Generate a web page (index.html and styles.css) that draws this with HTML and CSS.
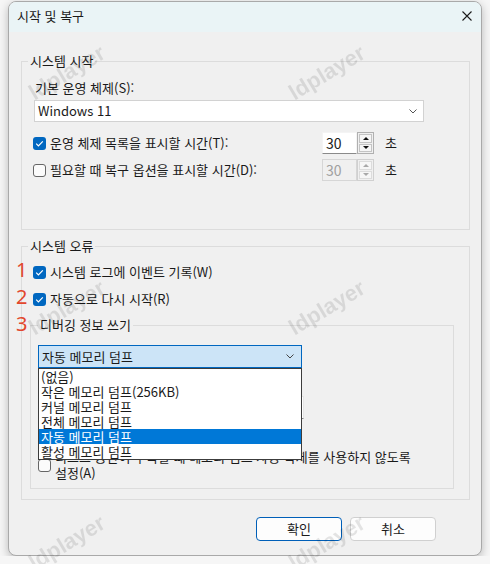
FILE: index.html
```html
<!DOCTYPE html>
<html lang="ko">
<head>
    <meta charset="UTF-8">
    <title>시작 및 복구</title>
    <link rel="stylesheet" href="styles.css">
</head>
<body>
    <div class="window">
        <div class="titlebar">
            <span class="title">시작 및 복구</span>
            <svg class="close" width="10" height="10" viewBox="0 0 10 10">
                <path d="M0.5 0.5 L9.5 9.5 M9.5 0.5 L0.5 9.5" stroke="#1b1b1b" stroke-width="1.1" fill="none"/>
            </svg>
        </div>

        <div class="content">
            <!-- 시스템 시작 -->
            <fieldset class="group startup">
                <legend>시스템 시작</legend>
                <div class="field-label">기본 운영 체제(S):</div>
                <div class="select">
                    <span>Windows 11</span>
                    <svg width="8" height="5" viewBox="0 0 8 5"><path d="M0.5 0.5 L4 4 L7.5 0.5" stroke="#555" fill="none"/></svg>
                </div>

                <div class="timeout-row">
                    <span class="check checked"><svg width="13" height="13" viewBox="0 0 13 13"><path d="M3.2 6.6 L5.4 8.8 L9.8 4.3" stroke="#fff" stroke-width="1.2" fill="none"/></svg></span>
                    <span class="timeout-label">운영 체제 목록을 표시할 시간(T):</span>
                    <div class="spinner">
                        <span class="spin-value">30</span>
                        <span class="spin-buttons"><span class="spin up"></span><span class="spin down"></span></span>
                    </div>
                    <span class="unit">초</span>
                </div>

                <div class="timeout-row second">
                    <span class="check"></span>
                    <span class="timeout-label">필요할 때 복구 옵션을 표시할 시간(D):</span>
                    <div class="spinner disabled">
                        <span class="spin-value">30</span>
                        <span class="spin-buttons"><span class="spin up"></span><span class="spin down"></span></span>
                    </div>
                    <span class="unit">초</span>
                </div>
            </fieldset>

            <!-- 시스템 오류 -->
            <fieldset class="group failure">
                <legend>시스템 오류</legend>
                <div class="check-row">
                    <span class="mark">1</span>
                    <span class="check checked"><svg width="13" height="13" viewBox="0 0 13 13"><path d="M3.2 6.6 L5.4 8.8 L9.8 4.3" stroke="#fff" stroke-width="1.2" fill="none"/></svg></span>
                    <span class="check-label">시스템 로그에 이벤트 기록(W)</span>
                </div>
                <div class="check-row">
                    <span class="mark">2</span>
                    <span class="check checked"><svg width="13" height="13" viewBox="0 0 13 13"><path d="M3.2 6.6 L5.4 8.8 L9.8 4.3" stroke="#fff" stroke-width="1.2" fill="none"/></svg></span>
                    <span class="check-label">자동으로 다시 시작(R)</span>
                </div>

                <fieldset class="group debug">
                    <legend><span class="mark">3</span>디버깅 정보 쓰기</legend>
                    <div class="combo">
                        <span>자동 메모리 덤프</span>
                        <svg width="8" height="5" viewBox="0 0 8 5"><path d="M0.5 0.5 L4 4 L7.5 0.5" stroke="#444" fill="none"/></svg>
                        <ul class="dropdown">
                            <li>(없음)</li>
                            <li>작은 메모리 덤프(256KB)</li>
                            <li>커널 메모리 덤프</li>
                            <li>전체 메모리 덤프</li>
                            <li class="selected">자동 메모리 덤프</li>
                            <li>활성 메모리 덤프</li>
                        </ul>
                    </div>
                    <div class="field-label">덤프 파일(F):</div>
                    <div class="textbox">%SystemRoot%\MEMORY.DMP</div>
                    <div class="check-row plain">
                        <span class="check checked"><svg width="13" height="13" viewBox="0 0 13 13"><path d="M3.2 6.6 L5.4 8.8 L9.8 4.3" stroke="#fff" stroke-width="1.2" fill="none"/></svg></span>
                        <span class="check-label">기존 파일 덮어쓰기(O)</span>
                    </div>
                    <div class="check-row plain wrap">
                        <span class="check"></span>
                        <span class="check-label">디스크 공간이 부족할 때 메모리 덤프 자동 삭제를 사용하지 않도록 설정(A)</span>
                    </div>
                </fieldset>
            </fieldset>

            <div class="buttons">
                <button class="primary">확인</button>
                <button>취소</button>
            </div>
        </div>
    </div>

    <!-- watermark layer over the whole screen -->
    <div class="watermark">
        <span style="left: 25px; top: 60px;">ldplayer</span>
        <span style="left: 285px; top: 60px;">ldplayer</span>
        <span style="left: 25px; top: 295px;">ldplayer</span>
        <span style="left: 285px; top: 295px;">ldplayer</span>
        <span style="left: 25px; top: 530px;">ldplayer</span>
        <span style="left: 285px; top: 530px;">ldplayer</span>
    </div>
</body>
</html>
```

FILE: styles.css
```css
* {
    box-sizing: border-box;
}
body {
    margin: 0;
    padding: 1px 8px 0;
    background: #f6f6f6;
    font-family: "Noto Sans CJK KR", sans-serif;
    font-size: 13px;
    line-height: 16px;
    color: #1a1a1a;
}
.window {
    width: 474px;
    height: 555px;
    border: 1px solid #a9a9a9;
    border-radius: 8px;
    background: #f0f0f0;
    overflow: hidden;
    box-shadow: 0 3px 10px rgba(0, 0, 0, 0.25);
}
.titlebar {
    height: 30px;
    background: #eaf4f6;
    display: flex;
    align-items: center;
    justify-content: space-between;
    padding: 0 9px 2px 8px;
}
.content {
    padding: 21px 11px 0 12px;
}

/* group boxes */
.group {
    margin: 0;
    min-width: 0;
    border: 1px solid #dcdcdc;
}
.group legend {
    padding: 0 2px;
    line-height: 16px;
}
.startup {
    padding: 0 12px 48px 11px;
}
.startup legend {
    margin-left: -5px;
}
.failure {
    margin-top: 8px;
    padding: 0 15px 10px 8px;
}
.failure > legend {
    margin-left: -2px;
}
.debug {
    margin-top: 9px;
    padding: 0 10px 7px 7px;
}
.debug legend {
    position: relative;
    margin-left: 0;
}
.field-label {
    margin-top: 11px;
    padding-left: 2px;
}
.debug .field-label {
    margin-top: 6px;
    padding-left: 1px;
}

/* combo boxes */
.select {
    margin: 4px 0 0 1px;
    width: 390px;
    height: 22px;
    background: #fff;
    border: 1px solid #d2d2d2;
    display: flex;
    align-items: center;
    justify-content: space-between;
    padding: 0 6px 0 3px;
}
.combo {
    position: relative;
    margin-top: 12px;
    width: 264px;
    height: 23px;
    background: #cce4f7;
    border: 1px solid #0067c0;
    display: flex;
    align-items: center;
    justify-content: space-between;
    padding: 0 7px 0 3px;
}
.dropdown {
    position: absolute;
    left: -1px;
    top: calc(100% + 1px);
    width: 264px;
    margin: 0;
    padding: 0;
    list-style: none;
    background: #fff;
    border: 1px solid #3c3c3c;
    z-index: 2;
}
.dropdown li {
    height: 15px;
    line-height: 15px;
    padding-left: 2px;
}
.dropdown li.selected {
    background: #0078d7;
    color: #fff;
}
.textbox {
    margin-top: 6px;
    width: 266px;
    height: 23px;
    background: #fff;
    border: 1px solid #e6e6e6;
    border-bottom-color: #8a8a8a;
    padding: 2px 3px;
}

/* checkboxes */
.check {
    width: 13px;
    height: 13px;
    flex: none;
    border-radius: 3px;
    border: 1px solid #666;
    background: #fbfbfb;
}
.check svg {
    display: block;
}
.check.checked {
    border: none;
    background: #0067c0;
}
.timeout-row {
    display: flex;
    align-items: center;
    height: 22px;
    margin-top: 10px;
}
.timeout-row.second {
    margin-top: 5px;
}
.timeout-label {
    width: 272px;
    margin-left: 4px;
}
.check-row {
    position: relative;
    display: flex;
    align-items: center;
    height: 18px;
    margin-top: 9px;
    padding-left: 3px;
}
.check-label {
    margin-left: 4px;
}
.check-row.plain {
    padding-left: 0;
    height: 16px;
    margin-top: 8px;
}
.check-row.wrap {
    height: auto;
    margin-top: 6px;
}
.check-row.wrap .check-label {
    width: 372px;
    word-break: keep-all;
}

/* red step numbers */
.mark {
    position: absolute;
    left: -14px;
    top: -4px;
    font-family: "Noto Sans", sans-serif;
    font-size: 20px;
    line-height: 22px;
    color: #e2472c;
}
.debug legend .mark {
    left: -22px;
    top: -4px;
}

/* number spinners */
.spinner {
    display: flex;
    width: 52px;
    height: 22px;
}
.spin-value {
    width: 35px;
    background: #fff;
    border: 1px solid #f4f4f4;
    border-bottom-color: #8a8a8a;
    padding: 2px 3px;
    font-size: 14px;
}
.spin-buttons {
    width: 17px;
    border: 1px solid #b0b0b0;
    padding: 1px;
    display: flex;
    flex-direction: column;
    gap: 1px;
}
.spin {
    flex: 1;
    background: #f6f6f6;
    border: 1px solid #c4c4c4;
    display: flex;
    align-items: center;
    justify-content: center;
}
.spin::after {
    content: "";
    border-left: 3px solid transparent;
    border-right: 3px solid transparent;
}
.spin.up::after {
    border-bottom: 3px solid #111;
}
.spin.down::after {
    border-top: 3px solid #111;
}
.spinner.disabled .spin-value {
    background: #f0f0f0;
    border: 1px solid #d6d6d6;
    color: #a0a0a0;
}
.spinner.disabled .spin-buttons {
    border-color: #d0d0d0;
}
.spinner.disabled .spin {
    border-color: #dcdcdc;
}
.spinner.disabled .spin.up::after {
    border-bottom-color: #a8a8a8;
}
.spinner.disabled .spin.down::after {
    border-top-color: #a8a8a8;
}
.unit {
    margin-left: 11px;
}

/* dialog buttons */
.buttons {
    margin-top: 17px;
    display: flex;
    justify-content: flex-end;
    gap: 8px;
    padding-right: 34px;
}
.buttons button {
    width: 86px;
    height: 24px;
    border: 1px solid #d0d0d0;
    border-radius: 4px;
    background: #fdfdfd;
    font: inherit;
    color: #1a1a1a;
}
.buttons button.primary {
    border-color: #005fb8;
}

.watermark {
    position: fixed;
    inset: 0;
    pointer-events: none;
    z-index: 5;
}
.watermark span {
    position: absolute;
    width: 84px;
    line-height: 26px;
    font-family: "Liberation Sans", sans-serif;
    font-size: 22px;
    font-weight: bold;
    color: rgba(0, 0, 0, 0.1);
    transform: rotate(-31deg);
}
```
